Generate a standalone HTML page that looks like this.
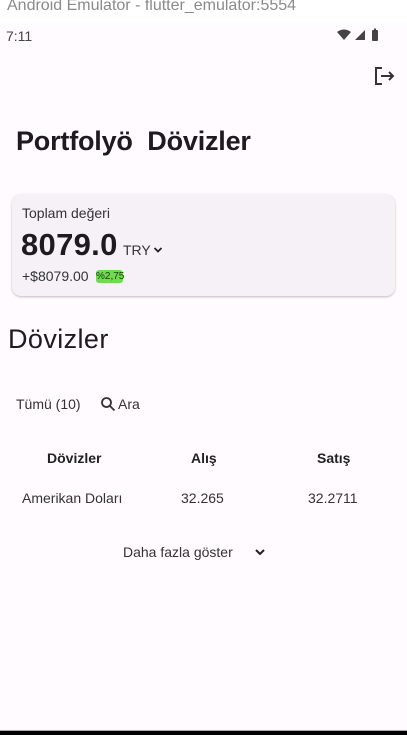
<!DOCTYPE html>
<html><head><meta charset="utf-8"><style>
*{margin:0;padding:0;box-sizing:border-box}
body{width:407px;height:735px;overflow:hidden;background:#fffbfe;font-family:"Liberation Sans",sans-serif;color:#1d1b20;position:relative}
.a{position:absolute;white-space:nowrap}
</style></head><body>
<div class="a" style="left:0;top:0;width:407px;height:23px;background:#fff"></div>
<div class="a" style="left:7px;top:-3px;font-size:16px;color:#8a8a8a">Android Emulator - flutter_emulator:5554</div>
<div class="a" style="left:6px;top:28px;font-size:14px;color:#444">7:11</div>
<svg class="a" style="left:336px;top:28px" width="46" height="14" viewBox="0 0 46 14">
<path d="M1 4 Q8 -1 15 4 L8 12 Z" fill="#444"/>
<path d="M19 12 L29 2 L29 12 Z" fill="#444"/>
<rect x="36" y="2" width="6" height="11" rx="1" fill="#444"/><rect x="38" y="0.5" width="2" height="2" fill="#444"/>
</svg>
<svg class="a" style="left:374px;top:65px" width="22" height="22" viewBox="0 0 22 22" fill="none" stroke="#333" stroke-width="2">
<path d="M8 3 H2 V19 H8"/><path d="M7 11 H19"/><path d="M15 7 L19 11 L15 15"/>
</svg>
<div class="a" style="left:16px;top:126px;font-size:27px;font-weight:bold;letter-spacing:-0.2px">Portfolyö&nbsp; Dövizler</div>
<div class="a" style="left:12px;top:194px;width:383px;height:102px;background:#f5f1f7;border-radius:9px;box-shadow:0 1px 2px rgba(0,0,0,.25)"></div>
<div class="a" style="left:22px;top:205px;font-size:14px;color:#333">Toplam değeri</div>
<div class="a" style="left:21px;top:227px;font-size:31px;font-weight:bold;letter-spacing:0.3px">8079.0</div>
<div class="a" style="left:123px;top:242px;font-size:14px;color:#333">TRY</div>
<svg class="a" style="left:153px;top:246px" width="10" height="8" viewBox="0 0 10 8"><path d="M1.5 2 L5 5.5 L8.5 2" fill="none" stroke="#222" stroke-width="1.8"/></svg>
<div class="a" style="left:22px;top:268px;font-size:14px;color:#333">+$8079.00</div>
<div class="a" style="left:96px;top:270px;width:27px;height:13px;background:#6fdc4f;border-radius:3px;font-size:10px;line-height:13px;text-align:center;color:#1a3a10">%2,75</div>
<div class="a" style="left:8px;top:324px;font-size:27px;letter-spacing:0.4px">Dövizler</div>
<div class="a" style="left:16px;top:396px;font-size:14px;color:#333">Tümü (10)</div>
<svg class="a" style="left:100px;top:396px" width="16" height="16" viewBox="0 0 16 16" fill="none" stroke="#333" stroke-width="1.8"><circle cx="6.5" cy="6.5" r="4.5"/><path d="M10 10 L14.5 14.5"/></svg>
<div class="a" style="left:118px;top:396px;font-size:14px;color:#333">Ara</div>
<div class="a" style="left:47px;top:450px;font-size:14px;font-weight:bold;color:#222">Dövizler</div>
<div class="a" style="left:191px;top:450px;font-size:14px;font-weight:bold;color:#222">Alış</div>
<div class="a" style="left:317px;top:450px;font-size:14px;font-weight:bold;color:#222">Satış</div>
<div class="a" style="left:22px;top:490px;font-size:14px;color:#333">Amerikan Doları</div>
<div class="a" style="left:181px;top:490px;font-size:14px;color:#333">32.265</div>
<div class="a" style="left:308px;top:490px;font-size:14px;color:#333">32.2711</div>
<div class="a" style="left:123px;top:544px;font-size:14px;color:#333">Daha fazla göster</div>
<svg class="a" style="left:254px;top:548px" width="12" height="8" viewBox="0 0 12 8"><path d="M2 2 L6 6 L10 2" fill="none" stroke="#222" stroke-width="2"/></svg>
<div class="a" style="left:0;top:730px;width:407px;height:1px;background:#aaa"></div>
<div class="a" style="left:0;top:731px;width:407px;height:4px;background:#000"></div>
</body></html>
